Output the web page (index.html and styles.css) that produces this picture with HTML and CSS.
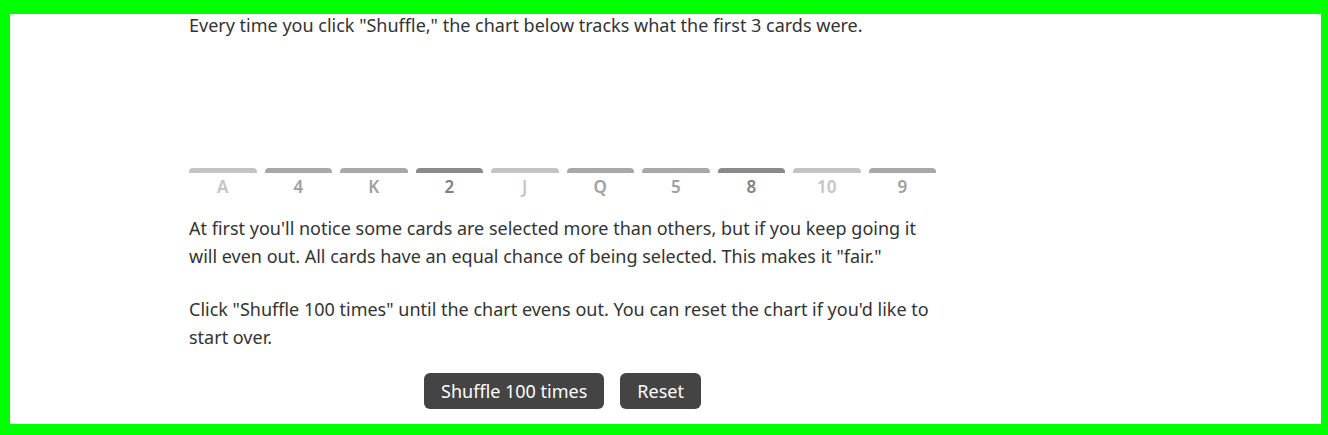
FILE: index.html
```html
<!DOCTYPE html>
<html lang="en">
<head>
  <meta charset="UTF-8" />
  <meta name="viewport" content="width=device-width, initial-scale=1.0"/>
  <title>Fair Shuffle</title>
  <link rel="stylesheet" href="styles.css">
</head>
<body>
  <div class="page">
    <div class="content">
      <p class="intro">Every time you click "Shuffle," the chart below tracks what the first 3 cards were.</p>

      <div class="chart" id="chart">
        <div class="col c1"><div class="bar"></div><span class="label">A</span></div>
        <div class="col c2"><div class="bar"></div><span class="label">4</span></div>
        <div class="col c2"><div class="bar"></div><span class="label">K</span></div>
        <div class="col c3"><div class="bar"></div><span class="label">2</span></div>
        <div class="col c1"><div class="bar"></div><span class="label">J</span></div>
        <div class="col c2"><div class="bar"></div><span class="label">Q</span></div>
        <div class="col c2"><div class="bar"></div><span class="label">5</span></div>
        <div class="col c3"><div class="bar"></div><span class="label">8</span></div>
        <div class="col c1"><div class="bar"></div><span class="label">10</span></div>
        <div class="col c2"><div class="bar"></div><span class="label">9</span></div>
      </div>

      <p>At first you'll notice some cards are selected more than others, but if you keep going it will even out. All cards have an equal chance of being selected. This makes it "fair."</p>

      <p class="last">Click "Shuffle 100 times" until the chart evens out. You can reset the chart if you'd like to start over.</p>

      <div class="buttons">
        <button type="button">Shuffle 100 times</button>
        <button type="button">Reset</button>
      </div>
    </div>
  </div>
</body>
</html>
```

FILE: styles.css
```css
body {
  margin: 0;
  background: #00ff00;
  padding: 14px 7px 11px 10px;
  font-family: "Noto Sans", sans-serif;
  color: #333;
}
.page {
  background: #fff;
  height: 410px;
  overflow: hidden;
}
.content {
  width: 747px;
  margin-left: 179px;
}
p {
  font-size: 18px;
  line-height: 28px;
  margin: 0 0 25px;
}
.intro {
  margin-top: -3px;
  margin-bottom: 0;
}
.last {
  margin-bottom: 22px;
}
.chart {
  display: grid;
  grid-template-columns: repeat(10, 1fr);
  column-gap: 8px;
  margin-bottom: 13px;
}
.col {
  display: flex;
  flex-direction: column;
  justify-content: flex-end;
  height: 162px;
}
.bar {
  height: 5px;
  border-radius: 4px 4px 0 0;
}
.label {
  display: block;
  text-align: center;
  font-size: 17px;
  line-height: 28px;
  font-weight: 600;
}
.c1 .bar { background: #c4c4c4; }
.c1 .label { color: #c4c4c4; }
.c2 .bar { background: #a8a8a8; }
.c2 .label { color: #a0a0a0; }
.c3 .bar { background: #8a8a8a; }
.c3 .label { color: #808080; }
.buttons {
  display: flex;
  justify-content: center;
  gap: 16px;
}
button {
  background: #444;
  color: #fff;
  border: none;
  border-radius: 6px;
  height: 36px;
  padding: 0 17px;
  font-family: inherit;
  font-size: 18px;
}
```
